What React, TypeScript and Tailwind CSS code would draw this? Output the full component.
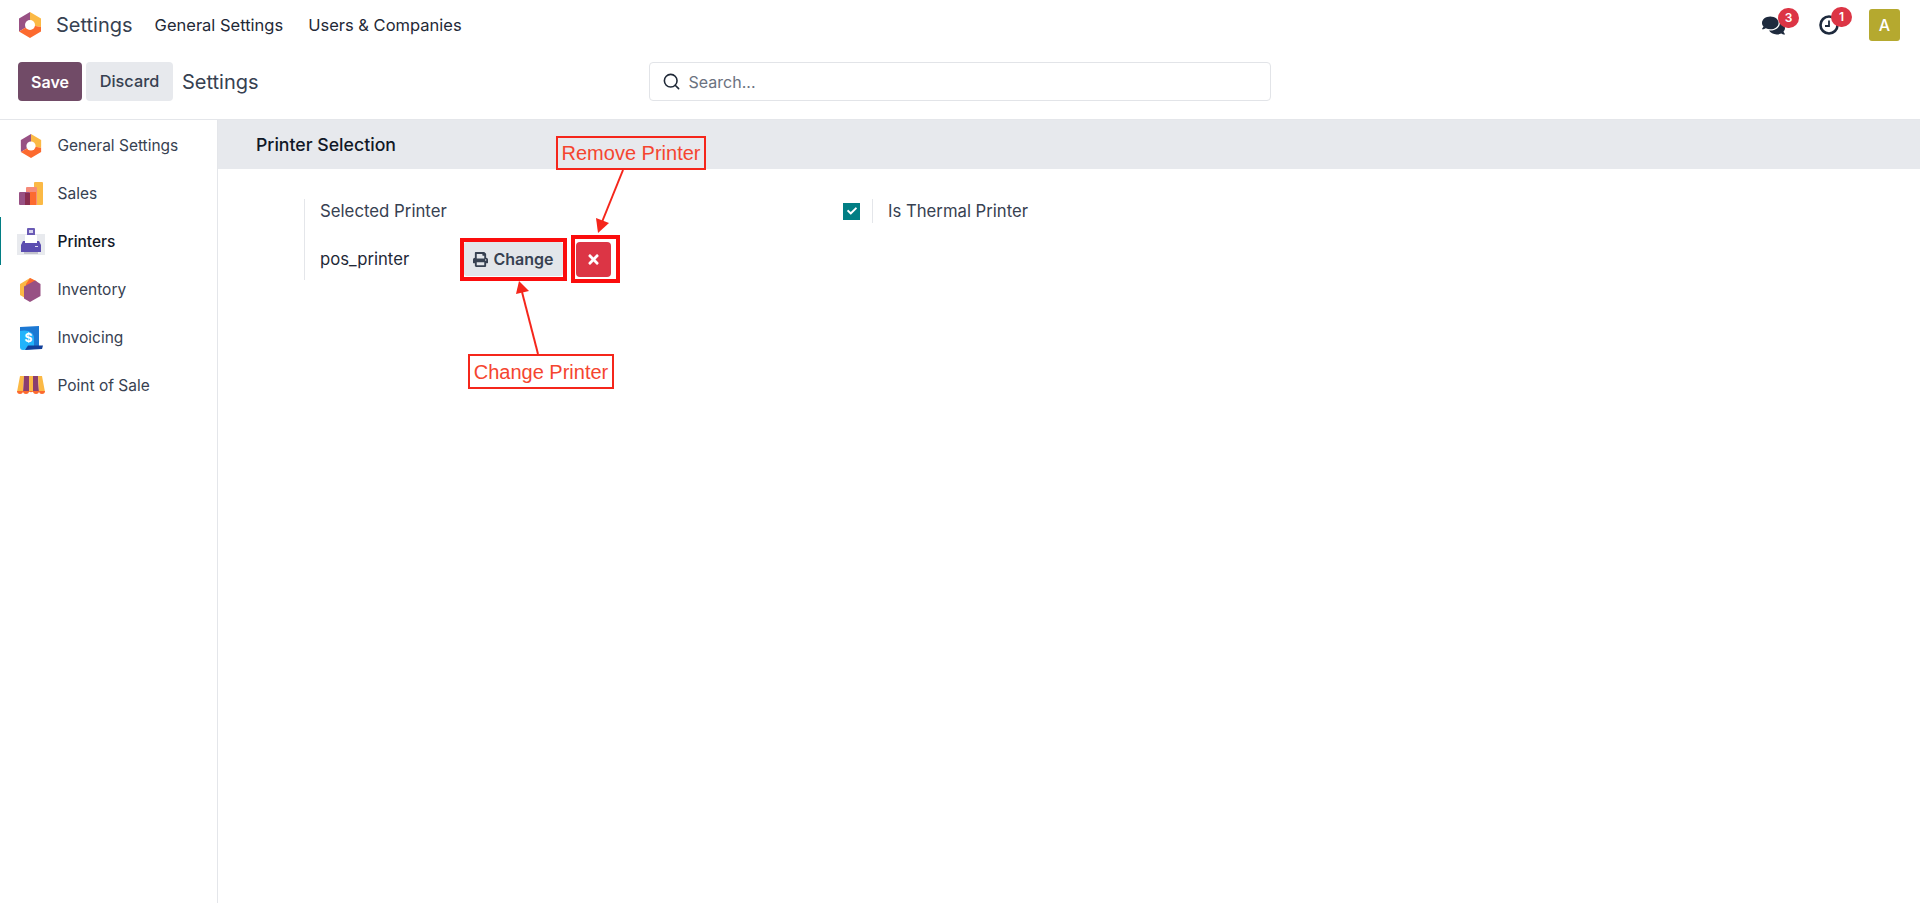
import React from "react";
import { Search } from "lucide-react";
import { FaComments, FaPrint, FaTimes, FaCheck } from "react-icons/fa";

const font = { fontFamily: "Inter, 'Liberation Sans', sans-serif" };

function Logo({ size = 26 }: { size?: number }) {
  return (
    <svg width={size} height={size} viewBox="0 0 26 26">
      <path d="M13 0 L24 6.5 L24 15 L13 13 Z" fill="#fbb945" />
      <path d="M13 0 L2 6.5 L2 19.5 L13 13 Z" fill="#985184" />
      <path d="M2 19.5 L13 26 L24 19.5 L24 15 L13 13 Z" fill="#fc6a2f" />
      <circle cx="13" cy="13" r="5" fill="#fff" />
    </svg>
  );
}
function Sales() {
  return (
    <svg width="24" height="24" viewBox="0 0 24 24">
      <rect x="15" y="0" width="9" height="23" rx="1" fill="#fbb945" />
      <rect x="7" y="5" width="11" height="18" rx="1" fill="#f58b7a" />
      <rect x="11" y="10" width="6" height="13" fill="#fc6a2f" />
      <rect x="0" y="10" width="11" height="13" rx="1" fill="#985184" />
      <rect x="6" y="11" width="5" height="12" fill="#8a2d4f" />
    </svg>
  );
}
function PrinterIcon() {
  return (
    <svg width="28" height="28" viewBox="0 0 28 28">
      <rect x="0" y="6" width="28" height="21" fill="#e8eaee" />
      <rect x="10" y="0" width="8" height="8" rx="1" fill="#6a5bb5" />
      <rect x="12" y="2" width="4" height="3" fill="#d7d3ee" />
      <rect x="8" y="7" width="12" height="8" fill="#fff" />
      <path d="M6 13 H8 V15 H20 V13 H22 L24 17 V24 H4 V17 Z" fill="#5b4db0" />
      <rect x="7" y="24" width="14" height="2" fill="#c2c2cc" />
      <rect x="18" y="18" width="3" height="1" fill="#e0ddf3" />
    </svg>
  );
}
function Inventory() {
  return (
    <svg width="22" height="24" viewBox="0 0 22 24">
      <path d="M10 0 L16 3 L5 9 L5 20 L0 17 L0 6 Z" fill="#fbb945" />
      <path d="M10 0 L17 3.5 L6 8 L6 6 Z" fill="#fc6a2f" />
      <path d="M15 2.500 L20.500 6 L20.500 18 L10 24 L4 20.500 L4 8.500 Z" fill="#985184" />
    </svg>
  );
}
function Invoicing() {
  return (
    <svg width="24" height="24" viewBox="0 0 24 24">
      <path d="M1 1 L20 0 L20 20 L1 21 Z" fill="#1c78d3" />
      <path d="M1 5 C8 3 15 6 15 12 L15 23 L4 24 C2 24 1 23 1 21 Z" fill="#22b3fb" />
      <path d="M9 19.500 L24 19.500 L23 23 L6 24 Z" fill="#12409a" />
      <text x="9.500" y="16" fontSize="12" fontWeight="700" fill="#fff" textAnchor="middle" fontFamily="Inter, sans-serif">$</text>
    </svg>
  );
}
function Pos() {
  return (
    <svg width="28" height="20" viewBox="0 0 28 20">
      <path d="M3 0 H7 L6 16 H0 Z" fill="#fbb945" />
      <path d="M7 0 H12 L12 16 H6 Z" fill="#8a3e70" />
      <path d="M12 0 H16 L16 16 H12 Z" fill="#fbb945" />
      <path d="M16 0 H21 L22 16 H16 Z" fill="#8a3e70" />
      <path d="M21 0 H25 L28 16 H22 Z" fill="#fbb945" />
      <path d="M0 15 H6 A3 3 0 0 1 0 15 Z M6 15 H12 A3 3 0 0 1 6 15 Z M12 15 H16 A2.500 3 0 0 1 12 15 Z M16 15 H22 A3 3 0 0 1 16 15 Z M22 15 H28 A3 3 0 0 1 22 15 Z" fill="#fc6a2f" />
    </svg>
  );
}
function ClockIcon() {
  return (
    <svg width="22" height="22" viewBox="0 0 22 22">
      <circle cx="11" cy="11" r="8.500" fill="none" stroke="#1e2a3d" strokeWidth="2.600" />
      <path d="M11 6.500 V12 H7" fill="none" stroke="#1e2a3d" strokeWidth="1.800" />
    </svg>
  );
}

const menu = [
  { label: "General Settings", icon: <Logo size={24} /> },
  { label: "Sales", icon: <Sales /> },
  { label: "Printers", icon: <PrinterIcon />, active: true },
  { label: "Inventory", icon: <Inventory /> },
  { label: "Invoicing", icon: <Invoicing /> },
  { label: "Point of Sale", icon: <Pos /> },
];

function Badge({ n, className }: { n: number; className: string }) {
  return (
    <span className={"absolute flex h-[20px] w-[21px] items-center justify-center rounded-full bg-[#dc3545] text-[12px] font-semibold text-white " + className}>
      {n}
    </span>
  );
}

export default function App() {
  return (
    <div style={font} className="relative flex h-[903px] w-[1920px] flex-col overflow-hidden bg-white text-[#374151]">
      <header className="flex h-[50px] items-center pl-[17px] pr-[20px]">
        <Logo size={26} />
        <span className="ml-[13px] text-[20px] text-[#374151]">Settings</span>
        <span className="ml-[22px] text-[16.5px] text-[#1f2937]">General Settings</span>
        <span className="ml-[25px] text-[16.5px] text-[#1f2937]">Users &amp; Companies</span>
        <div className="ml-auto flex items-center">
          <div className="relative mr-[30px] h-[22px] w-[26px] text-[#1e2a3d]">
            <FaComments size={23} />
            <Badge n={3} className="left-[16px] top-[-6px]" />
          </div>
          <div className="relative mr-[29px] h-[22px] w-[22px]">
            <ClockIcon />
            <Badge n={1} className="left-[13px] top-[-7px]" />
          </div>
          <div className="flex h-[32px] w-[31px] items-center justify-center rounded-[3px] bg-[#b5a92f] text-[16px] font-medium text-white">A</div>
        </div>
      </header>

      <div className="flex h-[70px] items-start border-b border-[#e4e6ea] pl-[18px] pt-[12px]">
        <button className="h-[39px] w-[64px] rounded-[4px] bg-[#714b67] text-[16px] font-semibold text-white">Save</button>
        <button className="ml-[4px] h-[39px] w-[87px] rounded-[4px] bg-[#e7e9ed] text-[16.3px] font-medium text-[#374151]">Discard</button>
        <span className="ml-[9px] flex h-[39px] items-center text-[20px] text-[#374151]">Settings</span>
        <div className="ml-[390px] flex h-[39px] w-[622px] items-center rounded-[4px] border border-[#e2e4e8] pl-[12px]">
          <Search size={19} strokeWidth={2} className="text-[#1f2937]" />
          <span className="ml-[8px] text-[16px] text-[#6b7280]">Search...</span>
        </div>
      </div>

      <div className="flex min-h-0 flex-1">
        <aside className="w-[218px] shrink-0 border-r border-[#e4e6ea] pt-[1px]">
          {menu.map((m) => (
            <div key={m.label} className={"flex h-[48px] items-center border-l-[1.5px] pt-[1px] " + (m.active ? "border-[#017e84]" : "border-transparent")}>
              <div className="flex w-[56.5px] shrink-0 items-center justify-center pl-[4px]">{m.icon}</div>
              <span className={"text-[15.5px] " + (m.active ? "font-medium text-[#111827]" : "text-[#374151]")}>{m.label}</span>
            </div>
          ))}
        </aside>
        <main className="min-w-0 flex-1">
          <div className="flex h-[49px] items-center bg-[#e7e9ed] pl-[38px] pt-[2px] text-[17.7px] font-medium text-[#111827]">Printer Selection</div>
          <div className="flex pl-[86px] pt-[30px]">
            <div className="h-[81px] w-[539px] border-l border-[#e4e6ea] pl-[15px]">
              <div className="flex h-[24px] items-center pt-[2px] text-[16.8px] text-[#374151]">Selected Printer</div>
              <div className="mt-[18px] flex h-[36px] items-center">
                <span className="w-[144px] pt-[2px] text-[16.7px] text-[#1f2937]">pos_printer</span>
                <button className="flex h-[34px] w-[99px] items-center justify-center gap-[5px] rounded-[3px] bg-[#e3e6ea] text-[16px] font-semibold text-[#374151]">
                  <FaPrint size={15} />
                  Change
                </button>
                <button className="ml-[13px] flex h-[35px] w-[35px] items-center justify-center rounded-[4px] bg-[#dc3545] text-white">
                  <FaTimes size={15} />
                </button>
              </div>
            </div>
            <div className="flex h-[24px] items-center">
              <span className="flex h-[17px] w-[17px] items-center justify-center bg-[#017e84] text-white">
                <FaCheck size={10} />
              </span>
              <span className="ml-[12px] h-[24px] border-l border-[#e4e6ea]" />
              <span className="ml-[15px] pt-[2px] text-[16.7px] text-[#374151]">Is Thermal Printer</span>
            </div>
          </div>
        </main>
      </div>

      {/* annotation overlay */}
      <div className="absolute left-[556px] top-[136px] flex h-[34px] w-[150px] items-center justify-center border-2 border-[#f5261b] text-[20px] text-[#f5452f]" style={{ fontFamily: "'Liberation Sans', sans-serif" }}>Remove Printer</div>
      <div className="absolute left-[468px] top-[354px] flex h-[35px] w-[146px] items-center justify-center border-2 border-[#f5261b] text-[20px] text-[#f5452f]" style={{ fontFamily: "'Liberation Sans', sans-serif" }}>Change Printer</div>
      <div className="absolute left-[460px] top-[238px] h-[43px] w-[107px] border-[4px] border-[#fb0d0d]" />
      <div className="absolute left-[571px] top-[235px] h-[48px] w-[49px] border-[4px] border-[#fb0d0d]" />
      <svg className="pointer-events-none absolute left-0 top-0" width="1920" height="903">
        <line x1="623" y1="170" x2="602" y2="222" stroke="#f5261b" strokeWidth="2" />
        <path d="M598 233 L596 218 L609 223 Z" fill="#f5261b" />
        <line x1="538" y1="354" x2="522" y2="292" stroke="#f5261b" strokeWidth="2" />
        <path d="M519 281 L516 294 L529 291 Z" fill="#f5261b" />
      </svg>
    </div>
  );
}
